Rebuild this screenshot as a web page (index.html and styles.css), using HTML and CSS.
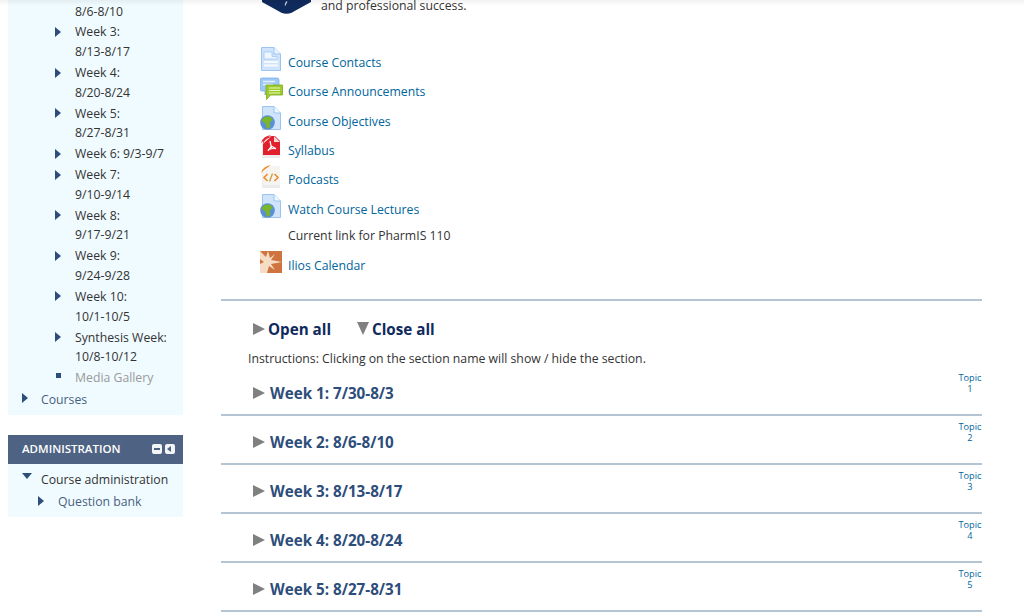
FILE: index.html
```html
<!DOCTYPE html>
<html lang="en">
  <head>
    <meta charset="UTF-8" />
    <title>PharmIS 110</title>
    <link rel="stylesheet" href="styles.css">
  </head>
  <body>
    <div class="top-shadow"></div>
    <div class="page">
      <aside class="sidebar">
        <div class="block nav-block">
          <ul class="weeks">
            <li class="cut">8/6-8/10</li>
            <li><span class="arrow"></span>Week 3:<br />8/13-8/17</li>
            <li><span class="arrow"></span>Week 4:<br />8/20-8/24</li>
            <li><span class="arrow"></span>Week 5:<br />8/27-8/31</li>
            <li><span class="arrow"></span>Week 6: 9/3-9/7</li>
            <li><span class="arrow"></span>Week 7:<br />9/10-9/14</li>
            <li><span class="arrow"></span>Week 8:<br />9/17-9/21</li>
            <li><span class="arrow"></span>Week 9:<br />9/24-9/28</li>
            <li><span class="arrow"></span>Week 10:<br />10/1-10/5</li>
            <li><span class="arrow"></span>Synthesis Week:<br />10/8-10/12</li>
            <li class="muted"><span class="dot"></span>Media Gallery</li>
          </ul>
          <div class="tree-top courses link"><span class="arrow"></span>Courses</div>
        </div>

        <div class="block-head">
          <span>ADMINISTRATION</span>
          <span class="head-icons">
            <span class="head-btn"><i class="minus"></i></span>
            <span class="head-btn"><i class="left"></i></span>
          </span>
        </div>
        <div class="block admin-block">
          <div class="tree-top"><span class="arrow down"></span>Course administration</div>
          <div class="tree-sub link"><span class="arrow"></span>Question bank</div>
        </div>
      </aside>

      <main class="content">
        <div class="intro">
          <svg class="shield" width="49" height="14" viewBox="0 0 49 14">
            <path d="M0 0H49V2L30 12.500Q24.500 15 19 12.500L0 2Z" fill="#0f2a5c" />
            <path d="M24 1.500L25.500 1.500L23.500 5.500L22.500 5.500Z" fill="#dfe5ee" />
          </svg>
          <span>and professional success.</span>
        </div>

        <ul class="resources">
          <li class="res">
            <svg class="icon" viewBox="0 0 24 24">
              <path d="M1.500 .500H14L20.500 7V23.500H1.500Z" fill="#cfe4fb" stroke="#9cc4f0" />
              <path d="M14 .500V7H20.500" fill="#eef6ff" stroke="#9cc4f0" />
              <path d="M4 5H12V9.500H17V12H4Z" fill="#eef6ff" stroke="#9cc4f0" stroke-width=".7" />
              <path d="M4 15H18M4 18.500H18" stroke="#f6faff" stroke-width="2" />
            </svg>
            <a href="#">Course Contacts</a>
          </li>
          <li class="res">
            <svg class="icon" viewBox="0 0 24 24">
              <path d="M0 3Q0 1 2 1H17Q19 1 19 3V14H8L5 18V14H2Q0 14 0 12Z" fill="#9ec8f5" stroke="#7cadea" stroke-width=".8" />
              <path d="M3 4.500H15M3 7.500H13" stroke="#e4f0fd" stroke-width="1.500" />
              <path d="M6 8H22.500V18H10.500L6.500 22.500V18H6Z" fill="#9ccb2c" stroke="#7faa1e" stroke-width=".8" />
              <path d="M9 11H20M9 13.500H20M9 16H20" stroke="#e8f6c0" />
            </svg>
            <a href="#">Course Announcements</a>
          </li>
          <li class="res">
            <svg class="icon" viewBox="0 0 24 24">
              <path d="M2.500 .500H14L20.500 7V23.500H2.500Z" fill="#cfe4fb" stroke="#9cc4f0" />
              <path d="M14 .500V7H20.500" fill="#eef6ff" stroke="#9cc4f0" />
              <circle cx="7.500" cy="16.500" r="7.300" fill="#5b8fd6" />
              <path d="M4 11L10 10.500L13 14L9.500 16.500L10.500 21L7 23L5.500 17.500L1.500 15Z" fill="#7bb52a" />
            </svg>
            <a href="#">Course Objectives</a>
          </li>
          <li class="res">
            <svg class="icon" viewBox="0 0 24 24">
              <path d="M2 4H20V23H2Z" fill="#ececec" />
              <path d="M3 20V6Q5 2 12 1H15L20 6V20Z" fill="#e2202c" />
              <path d="M1 8Q3 1 11 0L4 5Z" fill="#e2202c" />
              <path d="M3 9Q4 4 11 2L5 7Z" fill="#fbe5e5" />
              <path d="M14 1L20 7H14Z" fill="#f6d6d6" />
              <path d="M10 6L11.500 13M8 16L11.500 11L16 14M8 14.500L16 13" stroke="#fff" stroke-width="1.200" fill="none" />
            </svg>
            <a href="#">Syllabus</a>
          </li>
          <li class="res">
            <svg class="icon" viewBox="0 0 24 24">
              <path d="M2 4H20V23H2Z" fill="#ececec" />
              <path d="M3 20V6Q5 2 12 1H20V20Z" fill="#f6f4f0" />
              <path d="M1 8Q3 1 11 0L4 5Z" fill="#f08a24" />
              <path d="M7.500 9L4 12.500L7.500 16M14.500 9L18 12.500L14.500 16" stroke="#ee8a2a" stroke-width="1.600" fill="none" />
              <path d="M12.500 8.500L9.500 16.500" stroke="#c9a24a" stroke-width="1.400" />
            </svg>
            <a href="#">Podcasts</a>
          </li>
          <li class="res">
            <svg class="icon" viewBox="0 0 24 24">
              <path d="M2.500 .500H14L20.500 7V23.500H2.500Z" fill="#cfe4fb" stroke="#9cc4f0" />
              <path d="M14 .500V7H20.500" fill="#eef6ff" stroke="#9cc4f0" />
              <circle cx="7.500" cy="16.500" r="7.300" fill="#5b8fd6" />
              <path d="M4 11L10 10.500L13 14L9.500 16.500L10.500 21L7 23L5.500 17.500L1.500 15Z" fill="#7bb52a" />
            </svg>
            <a href="#">Watch Course Lectures</a>
          </li>
          <li class="res-note">Current link for PharmIS 110</li>
          <li class="res">
            <svg class="icon" viewBox="0 0 24 24">
              <rect x="0" y="1" width="22" height="22" fill="#cf7440" />
              <path d="M0 1L6 7L8 1L10 8L15 4L11 10L22 12L11 14L15 20L9 16L7 23H0V14L4 12L0 9Z" fill="#f6dcc4" />
            </svg>
            <a href="#">Ilios Calendar</a>
          </li>
        </ul>

        <div class="course-sections">
          <div class="toggles">
            <span class="toggle"><span class="tri"></span>Open all</span>
            <span class="toggle"><span class="tri tri-down"></span>Close all</span>
          </div>
          <p class="instructions">Instructions: Clicking on the section name will show / hide the section.</p>

          <div class="section first">
            <h3><span class="tri"></span>Week 1: 7/30-8/3</h3>
            <a class="topic" href="#">Topic<br />1</a>
          </div>
          <div class="section">
            <h3><span class="tri"></span>Week 2: 8/6-8/10</h3>
            <a class="topic" href="#">Topic<br />2</a>
          </div>
          <div class="section">
            <h3><span class="tri"></span>Week 3: 8/13-8/17</h3>
            <a class="topic" href="#">Topic<br />3</a>
          </div>
          <div class="section">
            <h3><span class="tri"></span>Week 4: 8/20-8/24</h3>
            <a class="topic" href="#">Topic<br />4</a>
          </div>
          <div class="section">
            <h3><span class="tri"></span>Week 5: 8/27-8/31</h3>
            <a class="topic" href="#">Topic<br />5</a>
          </div>
        </div>
      </main>
    </div>
  </body>
</html>
```

FILE: styles.css
```css
html,
body {
  margin: 0;
  height: 612px;
  overflow: hidden;
}
body {
  background: #fff;
  color: #333;
  font-family: "Open Sans", sans-serif;
  font-size: 12.250px;
}
ul {
  list-style: none;
  margin: 0;
  padding: 0;
}
a {
  color: #00659c;
  text-decoration: none;
}
.top-shadow {
  position: absolute;
  top: 0;
  left: 0;
  right: 0;
  height: 6px;
  background: linear-gradient(rgba(0, 0, 0, 0.05), rgba(0, 0, 0, 0));
}
.page {
  display: flex;
  align-items: flex-start;
}

/* left column */
.sidebar {
  width: 175px;
  margin-left: 8px;
  flex: none;
}
.block {
  background: #f0fbff;
}
.nav-block {
  padding-top: 1.500px;
  padding-bottom: 6px;
  height: 407.500px;
}
.weeks {
  padding-left: 67px;
}
.weeks li {
  position: relative;
  line-height: 19.600px;
  margin-bottom: 1.400px;
}
.weeks .arrow {
  left: -20px;
}
.muted {
  color: #999;
}
.link {
  color: #4a5f7f;
}
.arrow {
  position: absolute;
  left: 14px;
  top: 4.500px;
  width: 0;
  height: 0;
  border-left: 6.500px solid #2d4d7b;
  border-top: 5.500px solid transparent;
  border-bottom: 5.500px solid transparent;
}
.arrow.down {
  top: 4px;
  border-left: 5.500px solid transparent;
  border-right: 5.500px solid transparent;
  border-top: 6px solid #2d4d7b;
  border-bottom: 0;
}
.dot {
  position: absolute;
  left: -19px;
  top: 5px;
  width: 5px;
  height: 5px;
  background: #2d4d7b;
}
.tree-top,
.tree-sub {
  position: relative;
  line-height: 21px;
  padding-left: 33px;
}
.courses {
  margin-top: -0.500px;
}
.tree-sub {
  margin-top: 1px;
  padding-left: 50px;
}
.tree-sub .arrow {
  left: 30px;
}
.block-head {
  display: flex;
  align-items: center;
  justify-content: space-between;
  height: 27px;
  margin-top: 20px;
  padding: 0 8px 2px 14px;
  background: #4e6384;
  color: #fff;
  font-size: 11.500px;
  font-weight: 600;
}
.head-icons {
  display: flex;
  gap: 3px;
}
.head-btn {
  position: relative;
  display: block;
  width: 10px;
  height: 10px;
  background: #f2f4f7;
  border-radius: 2px;
}
.minus {
  position: absolute;
  left: 2px;
  top: 4px;
  width: 6px;
  height: 2px;
  background: #4e6384;
}
.left {
  position: absolute;
  left: 2px;
  top: 2px;
  width: 0;
  height: 0;
  border-right: 4px solid #4e6384;
  border-top: 3px solid transparent;
  border-bottom: 3px solid transparent;
}
.admin-block {
  padding: 5px 0 5px;
}

/* main column */
.content {
  width: 761px;
  margin-left: 38px;
  flex: none;
}
.intro {
  display: flex;
  gap: 10px;
  height: 14px;
  margin-left: 41px;
  line-height: 11px;
  color: #333;
}
.shield {
  flex: none;
}
.resources {
  margin-top: 33.600px;
  padding-left: 39px;
}
.res {
  display: flex;
  align-items: center;
  height: 29.400px;
}
.icon {
  width: 24px;
  height: 24px;
  margin-right: 4px;
  margin-top: -6px;
  flex: none;
}
.res-note {
  line-height: 22px;
  padding-left: 28px;
  color: #333;
  margin: 1px 0 3.400px;
}
.course-sections {
  margin-top: 19px;
  border-top: 2px solid #b4c4d2;
  padding-top: 17px;
}
.toggles {
  display: flex;
  gap: 26px;
  padding-left: 32px;
  font-size: 15.200px;
  font-weight: 700;
  color: #0f2a5c;
  line-height: 22px;
}
.toggle {
  display: flex;
  align-items: center;
  gap: 3px;
}
.tri {
  display: inline-block;
  width: 0;
  height: 0;
  border-left: 12px solid #808080;
  border-top: 6.500px solid transparent;
  border-bottom: 6.500px solid transparent;
}
.tri-down {
  border-left: 6px solid transparent;
  border-right: 6px solid transparent;
  border-top: 13px solid #808080;
  border-bottom: 0;
}
.instructions {
  margin: 9px 0 0 27px;
  line-height: 20px;
}
.section {
  position: relative;
  height: 47px;
  border-bottom: 2px solid #b4c4d2;
}
.section.first {
  height: 45px;
}
.section h3 {
  display: flex;
  align-items: center;
  gap: 5px;
  margin: 0;
  padding: 15px 0 0 32px;
  font-size: 15.200px;
  font-weight: 700;
  line-height: 22px;
  color: #2d4d7b;
}
.section.first h3 {
  padding-top: 13px;
}
.topic {
  position: absolute;
  right: 0;
  top: 5px;
  width: 24px;
  font-size: 9.200px;
  line-height: 11px;
  text-align: center;
}
.section.first .topic {
  top: 3px;
}
```
